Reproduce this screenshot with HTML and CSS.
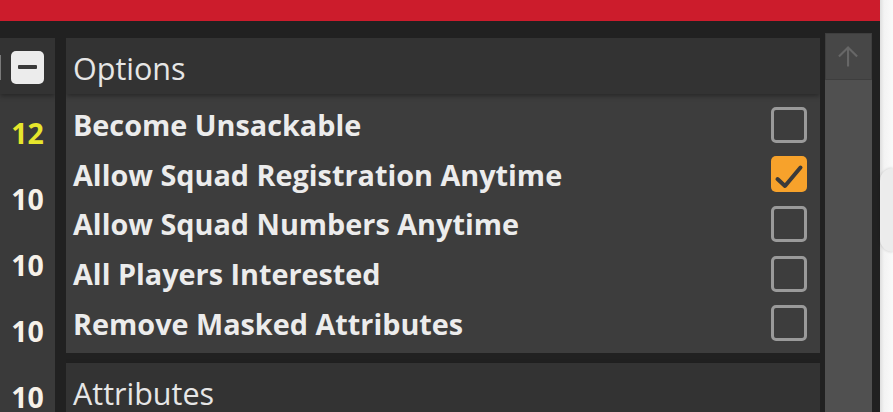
FILE: index.html
```html
<!DOCTYPE html>
<html>
<head>
<meta charset="utf-8">
<link rel="stylesheet" href="styles.css">
</head>
<body>
<div class="screen">
  <div class="app">
    <div class="topbar"></div>
    <div class="main">
      <div class="left">
        <div class="left-head">
          <span class="edge"></span>
          <button class="collapse" aria-label="Collapse"><span class="minus"></span></button>
        </div>
        <div class="nums">
          <div class="num num-hi">12</div>
          <div class="num">10</div>
          <div class="num">10</div>
          <div class="num">10</div>
          <div class="num">10</div>
        </div>
      </div>
      <div class="content">
        <section class="panel">
          <div class="panel-head">Options</div>
          <div class="panel-body">
            <div class="row"><span class="label">Become Unsackable</span><span class="box"></span></div>
            <div class="row"><span class="label">Allow Squad Registration Anytime</span><span class="box checked"><svg viewBox="0 0 36 36" width="36" height="36"><path d="M6.5 23 L14 30 L29.5 11.5" fill="none" stroke="#3a3a3a" stroke-width="4" stroke-linecap="round" stroke-linejoin="round"/></svg></span></div>
            <div class="row"><span class="label">Allow Squad Numbers Anytime</span><span class="box"></span></div>
            <div class="row"><span class="label">All Players Interested</span><span class="box"></span></div>
            <div class="row"><span class="label">Remove Masked Attributes</span><span class="box"></span></div>
          </div>
        </section>
        <section class="panel">
          <div class="panel-head">Attributes</div>
        </section>
      </div>
      <div class="scroll">
        <div class="scroll-up">
          <svg viewBox="0 0 46 46" width="44" height="46"><path d="M22 33 V13 M12.5 22.5 L22 13 L31.5 22.5" fill="none" stroke="#676767" stroke-width="2.2"/></svg>
        </div>
        <div class="scroll-track"></div>
      </div>
    </div>
  </div>
  <div class="side">
    <div class="side-bulge"></div>
  </div>
</div>
</body>
</html>
```
FILE: styles.css
```css
html, body {
  margin: 0;
  padding: 0;
  height: 100%;
  overflow: hidden;
}
body {
  background: #212121;
  font-family: "Open Sans", "Noto Sans", sans-serif;
}
.screen {
  display: flex;
  height: 412px;
}
.app {
  width: 880px;
  display: flex;
  flex-direction: column;
  background: #212121;
}
.topbar {
  height: 21px;
  flex-shrink: 0;
  background: #cc1c2c;
}
.main {
  flex: 1;
  display: flex;
  padding-top: 12px;
  min-height: 0;
  overflow: hidden;
}
.left {
  width: 55px;
  margin-top: 5px;
  background: #3a3a3a;
  display: flex;
  flex-direction: column;
  overflow: hidden;
}
.left-head {
  height: 56px;
  flex-shrink: 0;
  background: #333333;
  display: flex;
  align-items: center;
  gap: 10px;
  box-shadow: 0 2px 5px rgba(0, 0, 0, 0.35);
  position: relative;
}
.edge {
  width: 1px;
  height: 25px;
  background: #7a7a7a;
  margin-top: 3px;
}
.collapse {
  width: 33px;
  height: 33px;
  border: none;
  padding: 0;
  border-radius: 5px;
  background: #ececec;
  display: flex;
  align-items: center;
  justify-content: center;
  margin-top: 2px;
}
.minus {
  width: 19px;
  height: 4px;
  background: #3a3a3a;
  border-radius: 1px;
}
.nums {
  padding-top: 6px;
  display: flex;
  flex-direction: column;
  flex-shrink: 0;
}
.num {
  height: 66px;
  line-height: 66px;
  text-align: center;
  font-weight: 700;
  font-size: 28.5px;
  color: #f6f1e9;
}
.num-hi {
  color: #e6e62c;
}
.content {
  width: 754px;
  margin-left: 11px;
  margin-top: 5px;
  display: flex;
  flex-direction: column;
  gap: 10px;
  overflow: hidden;
}
.panel {
  flex-shrink: 0;
  background: #3d3d3d;
}
.panel-head {
  height: 56px;
  box-sizing: border-box;
  padding: 4px 0 0 7px;
  display: flex;
  align-items: center;
  background: #333333;
  color: #e6e6e6;
  font-size: 30.5px;
  font-weight: 400;
  box-shadow: 0 2px 5px rgba(0, 0, 0, 0.35);
  position: relative;
}
.panel-body {
  padding: 6px 13px 5px 7px;
}
.row {
  height: 49.6px;
  display: flex;
  align-items: center;
  justify-content: space-between;
}
.label {
  color: #ececec;
  font-size: 28.8px;
  font-weight: 700;
  white-space: nowrap;
}
.box {
  width: 36px;
  height: 36px;
  box-sizing: border-box;
  border: 3px solid #9a9a9a;
  border-radius: 5px;
  display: flex;
  align-items: center;
  justify-content: center;
}
.box.checked {
  border: none;
  background: #f7a22b;
}
.scroll {
  width: 47px;
  margin-left: 5px;
  display: flex;
  flex-direction: column;
  background: #505050;
}
.scroll-up {
  height: 47px;
  flex-shrink: 0;
  box-sizing: border-box;
  background: #474747;
  border: 1px solid #3e3e3e;
  display: flex;
  align-items: center;
  justify-content: center;
}
.scroll-track {
  flex: 1;
}
.side {
  flex: 1;
  background: linear-gradient(to right, #dedede 0, #f3f3f3 4px, #fafafa 100%);
  padding-top: 168px;
}
.side-bulge {
  height: 84px;
  background: #ececec;
  border-radius: 16px 0 0 16px;
  box-shadow: 0 0 3px rgba(0, 0, 0, 0.18);
}
```
